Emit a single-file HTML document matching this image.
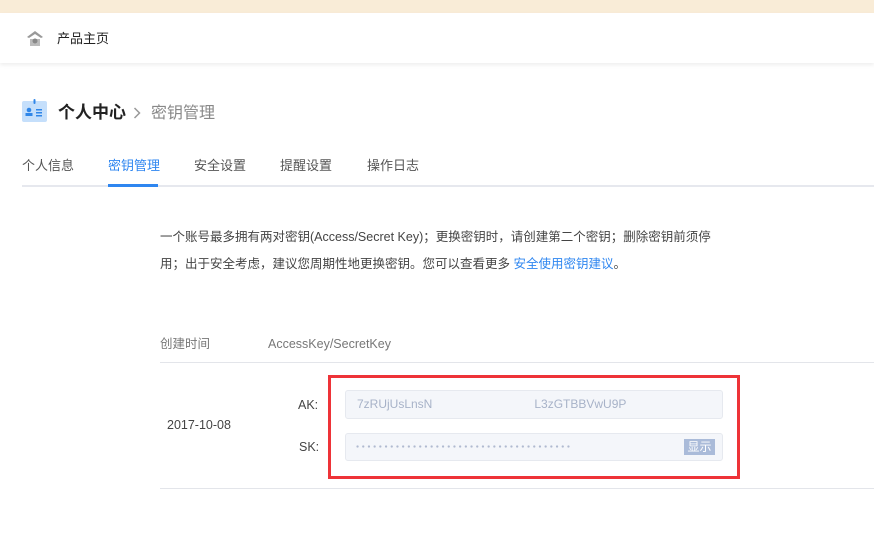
<!DOCTYPE html>
<html><head><meta charset="utf-8"><style>
*{margin:0;padding:0;box-sizing:border-box}
body{width:874px;height:540px;background:#fff;font-family:"Liberation Sans","Noto Sans CJK SC",sans-serif;position:relative;overflow:hidden;color:#333}
.a{position:absolute;white-space:nowrap;line-height:1.2}
</style></head><body>
<div class="a" style="left:0;top:0;width:874px;height:13px;background:#f9ecd7"></div>
<div class="a" style="left:0;top:13px;width:874px;height:50px;background:#fff;box-shadow:0 2px 4px rgba(0,0,0,0.07)"></div>
<svg class="a" style="left:26px;top:29px" width="18" height="18" viewBox="0 0 18 18"><path d="M1 8L9 2L17 8L15 9L9 5L3 9Z" fill="#999"/><rect x="4" y="10" width="10" height="7" fill="#bbb"/><circle cx="9" cy="12" r="2.5" fill="#888"/></svg>
<div class="a" style="left:57px;top:31px;font-size:13px;color:#222">产品主页</div>
<svg class="a" style="left:22px;top:99px" width="25" height="24" viewBox="0 0 25 24"><rect x="0" y="2" width="25" height="21" rx="2" fill="#c5dffb"/><rect x="11.5" y="0" width="2" height="5" rx="1" fill="#2f86e8"/><circle cx="7" cy="11" r="2.3" fill="#2f86e8"/><rect x="3.5" y="14" width="7" height="3" fill="#2f86e8"/><rect x="14" y="10" width="6" height="1.5" fill="#2f86e8"/><rect x="14" y="13" width="6" height="1.5" fill="#2f86e8"/><rect x="14" y="16" width="6" height="1.5" fill="#2f86e8"/></svg>
<div class="a" style="left:58px;top:103px;font-size:17px;font-weight:bold;color:#222">个人中心</div>
<svg class="a" style="left:133px;top:107px" width="8" height="12" viewBox="0 0 8 12"><path d="M1.5 1L6.5 6L1.5 11" stroke="#999" stroke-width="1.5" fill="none"/></svg>
<div class="a" style="left:151px;top:104px;font-size:16px;color:#888">密钥管理</div>
<div class="a" style="left:22px;top:185px;width:852px;height:2px;background:#e6e8ee"></div>
<div class="a" style="left:108px;top:184px;width:50px;height:3px;background:#2e86f0"></div>
<div class="a" style="left:22px;top:158px;font-size:13px;color:#555">个人信息</div>
<div class="a" style="left:108px;top:158px;font-size:13px;color:#2e86f0">密钥管理</div>
<div class="a" style="left:194px;top:158px;font-size:13px;color:#555">安全设置</div>
<div class="a" style="left:280px;top:158px;font-size:13px;color:#555">提醒设置</div>
<div class="a" style="left:367px;top:158px;font-size:13px;color:#555">操作日志</div>
<div class="a" style="left:160px;top:224px;font-size:12.5px;color:#444;line-height:27px;white-space:normal;width:570px">一个账号最多拥有两对密钥(Access/Secret Key)；更换密钥时，请创建第二个密钥；删除密钥前须停用；出于安全考虑，建议您周期性地更换密钥。您可以查看更多 <span style="color:#2e86f0">安全使用密钥建议</span>。</div>
<div class="a" style="left:160px;top:337px;font-size:12.5px;color:#777">创建时间</div>
<div class="a" style="left:268px;top:337px;font-size:12.5px;color:#777">AccessKey/SecretKey</div>
<div class="a" style="left:160px;top:362px;width:714px;height:1px;background:#e3e5ea"></div>
<div class="a" style="left:160px;top:488px;width:714px;height:1px;background:#e3e5ea"></div>
<div class="a" style="left:167px;top:418px;font-size:12.5px;color:#444">2017-10-08</div>
<div class="a" style="left:298px;top:398px;font-size:12.5px;color:#444">AK:</div>
<div class="a" style="left:299px;top:440px;font-size:12.5px;color:#444">SK:</div>
<div class="a" style="left:345px;top:390px;width:378px;height:29px;background:#f4f6fa;border:1px solid #e6e9ef;border-radius:3px"></div>
<div class="a" style="left:357px;top:397px;font-size:12px;color:#a7b2c8">7zRUjUsLnsN<span style="color:transparent">xxxxxxxxxxxxxxxxx</span>L3zGTBBVwU9P</div>
<div class="a" style="left:345px;top:433px;width:378px;height:28px;background:#f4f6fa;border:1px solid #e6e9ef;border-radius:3px"></div>
<svg class="a" style="left:356px;top:445px" width="216" height="3"><line x1="1.5" y1="1.5" x2="215" y2="1.5" stroke="#b0bad0" stroke-width="2.2" stroke-dasharray="0.1 5.6" stroke-linecap="round"/></svg>
<div class="a" style="left:684px;top:439px;width:31px;height:16px;background:#aabbd9;color:#fff;font-size:12px;line-height:16px;text-align:center">显示</div>
<div class="a" style="left:328px;top:375px;width:412px;height:104px;border:3px solid #ee3338"></div>
</body></html>
